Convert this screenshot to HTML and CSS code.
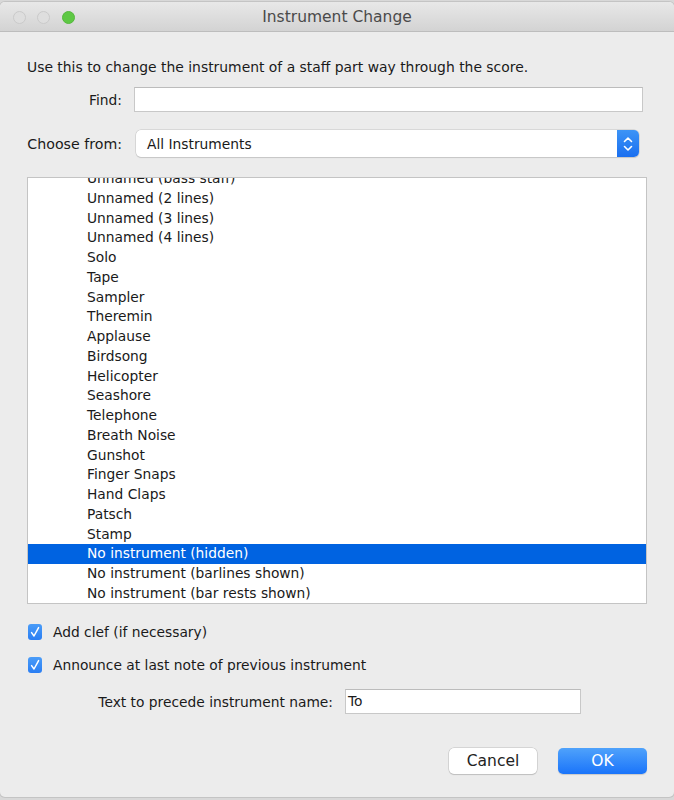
FILE: index.html
```html
<!DOCTYPE html>
<html>
<head>
<meta charset="utf-8">
<link rel="stylesheet" href="styles.css">
</head>
<body>
<div class="window">
  <div class="titlebar">
    <div class="lights">
      <span class="light"></span>
      <span class="light"></span>
      <span class="light green"></span>
    </div>
    <div class="title">Instrument Change</div>
  </div>
  <div class="content">
    <p class="desc">Use this to change the instrument of a staff part way through the score.</p>
    <div class="row find-row">
      <label class="label">Find:</label>
      <div class="textfield find-field"></div>
    </div>
    <div class="row choose-row">
      <label class="label">Choose from:</label>
      <div class="select">
        <span class="select-text">All Instruments</span>
        <span class="stepper">
          <svg width="12" height="18" viewBox="0 0 12 18"><path d="M2.5 6.5 L6 3 L9.5 6.5" fill="none" stroke="#fff" stroke-width="1.6" stroke-linecap="round" stroke-linejoin="round"/><path d="M2.5 11.5 L6 15 L9.5 11.5" fill="none" stroke="#fff" stroke-width="1.6" stroke-linecap="round" stroke-linejoin="round"/></svg>
        </span>
      </div>
    </div>
    <div class="listbox">
      <ul class="list">
        <li>Unnamed (bass staff)</li>
        <li>Unnamed (2 lines)</li>
        <li>Unnamed (3 lines)</li>
        <li>Unnamed (4 lines)</li>
        <li>Solo</li>
        <li>Tape</li>
        <li>Sampler</li>
        <li>Theremin</li>
        <li>Applause</li>
        <li>Birdsong</li>
        <li>Helicopter</li>
        <li>Seashore</li>
        <li>Telephone</li>
        <li>Breath Noise</li>
        <li>Gunshot</li>
        <li>Finger Snaps</li>
        <li>Hand Claps</li>
        <li>Patsch</li>
        <li>Stamp</li>
        <li class="selected">No instrument (hidden)</li>
        <li>No instrument (barlines shown)</li>
        <li>No instrument (bar rests shown)</li>
      </ul>
    </div>
    <div class="check-row first">
      <span class="checkbox"><svg width="14" height="16" viewBox="0 0 14 16"><path d="M3.6 8.6 L6 12 L10.6 3.6" fill="none" stroke="#fff" stroke-width="1.5" stroke-linecap="round" stroke-linejoin="round"/></svg></span>
      <span class="check-label">Add clef (if necessary)</span>
    </div>
    <div class="check-row">
      <span class="checkbox"><svg width="14" height="16" viewBox="0 0 14 16"><path d="M3.6 8.6 L6 12 L10.6 3.6" fill="none" stroke="#fff" stroke-width="1.5" stroke-linecap="round" stroke-linejoin="round"/></svg></span>
      <span class="check-label">Announce at last note of previous instrument</span>
    </div>
    <div class="row precede-row">
      <label class="precede-label">Text to precede instrument name:</label>
      <div class="textfield precede-field">To</div>
    </div>
    <div class="buttons">
      <button class="btn cancel">Cancel</button>
      <button class="btn ok">OK</button>
    </div>
  </div>
</div>
</body>
</html>
```

FILE: styles.css
```css
html, body {
  margin: 0;
  padding: 0;
}
body {
  background: #d8d8d8;
  width: 674px;
  height: 800px;
  overflow: hidden;
  font-family: "DejaVu Sans", "Liberation Sans", sans-serif;
  font-size: 13.8px;
  color: #1a1a1a;
}
.window {
  margin-top: 2px;
  height: 795px;
  background: #ececec;
  border-radius: 5px;
  overflow: hidden;
  box-shadow: 0 0 0 1px #c4c4c4;
}
.titlebar {
  height: 29px;
  background: linear-gradient(#e8e8e8, #d3d3d3);
  border-bottom: 1px solid #bdbdbd;
  position: relative;
  display: flex;
  align-items: center;
  justify-content: center;
}
.lights {
  position: absolute;
  left: 13px;
  top: 9px;
  display: flex;
  gap: 11px;
}
.light {
  width: 13px;
  height: 13px;
  border-radius: 50%;
  background: #dedede;
  border: 1px solid #cacaca;
  box-sizing: border-box;
}
.light.green {
  margin-left: 1px;
  background: #5ec844;
  border-color: #55b83e;
}
.title {
  font-size: 15.5px;
  color: #4a4a4a;
}
.content {
  padding: 27px 27px 0 27px;
}
.desc {
  margin: 0;
  line-height: 16px;
  font-size: 13.9px;
}
.row {
  display: flex;
  align-items: center;
}
.label {
  width: 95px;
  text-align: right;
  flex: none;
  white-space: nowrap;
}
.choose-row .label {
  font-size: 14.2px;
}
.find-row {
  margin-top: 12px;
}
.textfield {
  height: 25px;
  box-sizing: border-box;
  background: #fff;
  border: 1px solid #c8c8c8;
  border-top-color: #bcbcbc;
  line-height: 23px;
  padding-left: 3px;
}
.find-field {
  margin-left: 12px;
  width: 509px;
}
.choose-row {
  margin-top: 18px;
}
.select {
  margin-left: 14px;
  width: 503px;
  height: 27px;
  box-sizing: border-box;
  background: #fff;
  border-radius: 5px;
  box-shadow: 0 0 0 0.5px #c4c4c4, 0 1px 1px rgba(0,0,0,0.15);
  display: flex;
  align-items: center;
  justify-content: space-between;
  overflow: hidden;
}
.select-text {
  padding-left: 11px;
}
.stepper {
  width: 22px;
  height: 27px;
  background: linear-gradient(#3d94f6, #1a6ff0);
  display: flex;
  align-items: center;
  justify-content: center;
}
.listbox {
  margin-top: 20px;
  width: 620px;
  height: 427px;
  box-sizing: border-box;
  border: 1px solid #c4c4c4;
  background: #fff;
  overflow: hidden;
}
.list {
  list-style: none;
  margin: -8.8px 0 0 0;
  padding: 0;
}
.list li {
  height: 19.75px;
  line-height: 19.75px;
  padding-left: 59px;
  white-space: nowrap;
}
.list li.selected {
  background: #0063e1;
  color: #fff;
}
.check-row {
  display: flex;
  align-items: center;
  height: 18px;
  margin-left: 1px;
}
.check-row.first {
  margin-top: 19px;
}
.check-row + .check-row {
  margin-top: 15px;
}
.checkbox {
  width: 14px;
  height: 16px;
  border-radius: 3px;
  background: linear-gradient(#4a9cf8, #2a7ef3);
  display: flex;
  align-items: center;
  justify-content: center;
  flex: none;
}
.check-label {
  margin-left: 11px;
}
.precede-row {
  margin-top: 15px;
}
.precede-label {
  width: 306px;
  text-align: right;
  flex: none;
  white-space: nowrap;
}
.precede-field {
  margin-left: 12px;
  width: 236px;
  padding-left: 2px;
}
.buttons {
  margin-top: 34px;
  display: flex;
  justify-content: flex-end;
  gap: 21px;
  width: 620px;
}
.btn {
  font-family: "DejaVu Sans", "Liberation Sans", sans-serif;
  font-size: 15.5px;
  height: 26px;
  border-radius: 5px;
  border: none;
  padding: 0;
  line-height: 26px;
}
.cancel {
  width: 88px;
  background: #fff;
  color: #222;
  box-shadow: 0 0 0 0.5px #bdbdbd, 0 1px 1px rgba(0,0,0,0.18);
}
.ok {
  width: 89px;
  background: linear-gradient(#4fa2fb, #1a74fa);
  color: #fff;
  box-shadow: 0 1px 1px rgba(0,0,0,0.15);
}
```
